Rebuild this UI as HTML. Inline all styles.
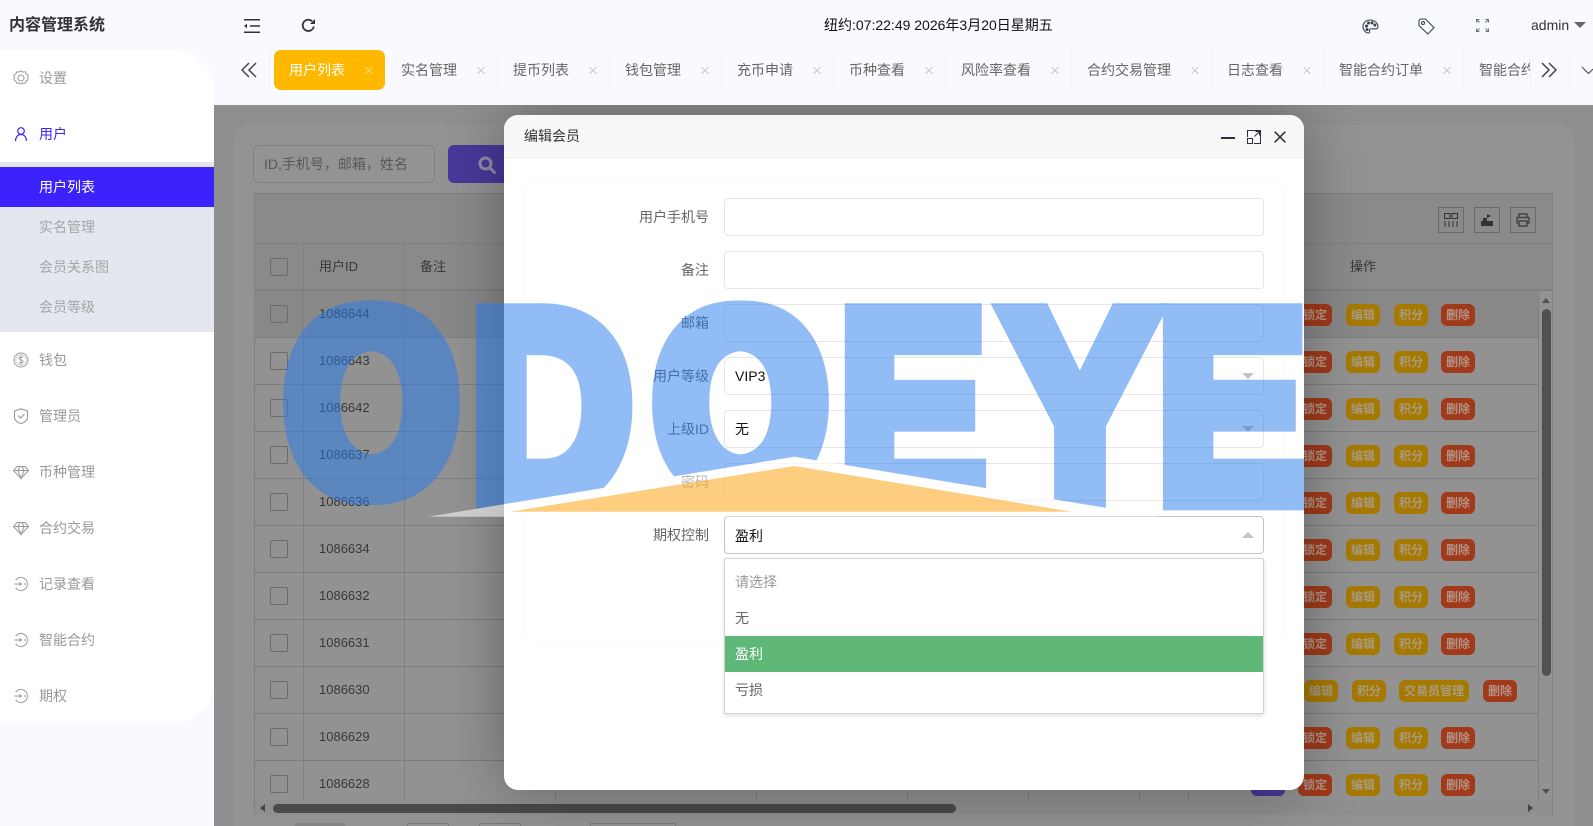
<!DOCTYPE html>
<html lang="zh"><head><meta charset="utf-8"><title>内容管理系统</title>
<style>
html,body{margin:0;padding:0;width:1593px;height:826px;overflow:hidden;background:#f8faff;font-family:"Liberation Sans","Noto Sans CJK SC",sans-serif;font-size:14px}
.a{position:absolute}
.t{position:absolute;line-height:20px;white-space:nowrap}
#content{position:absolute;left:214px;top:105px;width:1379px;height:721px;background:#8e8f91;overflow:hidden}
#wrap{position:absolute;left:0;top:0;width:1593px;height:826px;overflow:hidden}
.ck{position:absolute;left:270px;width:16px;height:16px;border:1px solid #6c6c6c;border-radius:2px}
.hl{position:absolute;left:254px;width:1284px;height:1px;background:#7e7e7e}
.vl{position:absolute;top:243px;height:557px;width:1px;background:#808080}
.id{position:absolute;left:319px;line-height:20px;color:#383838;font-size:13px}
.b{position:absolute;height:22px;line-height:22px;border-radius:6px;font-size:12px;font-weight:700;text-align:center;color:#a89b80;width:34px}
.r{background:#a03a1a;color:#b39385}.y{background:#a67900}
.tt{position:absolute;top:60px;line-height:20px;color:#666;white-space:nowrap}
.tx{position:absolute;top:61px;line-height:20px;color:#cfcfcf;font-size:17px;width:14px;text-align:center}
.sp{position:absolute;top:50px;height:40px;width:1px;background:#f0f2f7}
.m{position:absolute;left:39px;line-height:20px;color:#999;white-space:nowrap}
.sub{color:#a6a6a6}
.ic{position:absolute;left:13px;width:16px;height:16px;fill:none;stroke:#999;stroke-width:1}
.lb{position:absolute;right:884px;line-height:20px;color:#666;white-space:nowrap}
.in{position:absolute;left:724px;width:538px;height:36px;border:1px solid #e6e6e6;border-radius:4px;background:transparent}
.val{position:absolute;left:735px;line-height:20px;color:#111}
.ar{position:absolute;left:1242px;width:0;height:0;border-left:6px solid transparent;border-right:6px solid transparent}
.op{position:absolute;left:0;width:538px;height:36px;line-height:36px;color:#666;text-indent:10px}
.tb{position:absolute;top:207px;width:24px;height:24px;border:1px solid #6a6a6a}
</style></head>
<body>
<div id="wrap">
<div id="content"></div>
<div class="a" style="left:234px;top:125px;width:1340px;height:701px;background:#939394;border-radius:16px 16px 0 0"></div>
<div class="a" style="left:254px;top:193px;width:1299px;height:622px;background:#929292;border:1px solid #808080;box-sizing:border-box"></div>
<div class="a" style="left:254px;top:193px;width:1299px;height:97px;background:#8a8a8a;border:1px solid #808080;box-sizing:border-box"></div>
<div class="a" style="left:254px;top:290px;width:1284px;height:47px;background:#888"></div>
<div class="a" style="left:253px;top:145px;width:180px;height:36px;border:1px solid #808080;border-radius:6px"></div>
<div class="t" style="left:264px;top:154px;color:#585858">ID,手机号，邮箱，姓名</div>
<div class="a" style="left:448px;top:145px;width:70px;height:38px;background:#49389a;border-radius:6px"></div>
<svg class="a" style="left:478px;top:156px" width="18" height="18" viewBox="0 0 18 18" fill="none" stroke="#8f8da8" stroke-width="3"><circle cx="7.5" cy="7.5" r="5.5"/><path d="M12 12l4.5 4.5" stroke-linecap="round"/></svg>

<div class="hl" style="top:243px;width:1299px"></div><div class="hl" style="top:290px;width:1299px"></div><div class="hl" style="top:337px"></div><div class="hl" style="top:384px"></div><div class="hl" style="top:431px"></div><div class="hl" style="top:478px"></div><div class="hl" style="top:525px"></div><div class="hl" style="top:572px"></div><div class="hl" style="top:619px"></div><div class="hl" style="top:666px"></div><div class="hl" style="top:713px"></div><div class="hl" style="top:760px"></div>
<div class="vl" style="left:303px"></div><div class="vl" style="left:404px"></div><div class="vl" style="left:555px"></div><div class="vl" style="left:756px"></div><div class="vl" style="left:907px"></div><div class="vl" style="left:1028px"></div><div class="vl" style="left:1139px"></div><div class="vl" style="left:1188px"></div>

<div class="tb" style="left:1438px"></div><div class="tb" style="left:1474px"></div><div class="tb" style="left:1510px"></div>
<svg class="a" style="left:1444px;top:213px" width="14" height="14" viewBox="0 0 14 14" fill="none" stroke="#333"><path d="M.5.5h5.5v5H.5zM8 .5h5.5v5H8zM1 8v6M5 8v6M9 8v6M13 8v6"/></svg>
<svg class="a" style="left:1480px;top:213px" width="14" height="14" viewBox="0 0 14 14" fill="#333"><path d="M1 8h12v5H1zM3 5h4v3H3zM7 1l4 2-4 2z"/></svg>
<svg class="a" style="left:1516px;top:213px" width="14" height="14" viewBox="0 0 14 14" fill="none" stroke="#444" stroke-width="1.4"><path d="M3 4V1h8v3M3 10H1V4.500h12V10h-2M3 8h8v5H3z"/></svg>

<div class="ck" style="top:258px"></div>
<div class="t" style="left:319px;top:257px;color:#383838;font-size:13px">用户ID</div>
<div class="t" style="left:420px;top:257px;color:#383838;font-size:13px">备注</div>
<div class="t" style="left:1350px;top:257px;color:#383838;font-size:13px">操作</div>

<div class="ck" style="top:305px"></div><div class="id" style="top:304px">1086644</div>
<div class="ck" style="top:352px"></div><div class="id" style="top:351px">1086643</div>
<div class="ck" style="top:399px"></div><div class="id" style="top:398px">1086642</div>
<div class="ck" style="top:446px"></div><div class="id" style="top:445px">1086637</div>
<div class="ck" style="top:493px"></div><div class="id" style="top:492px">1086636</div>
<div class="ck" style="top:540px"></div><div class="id" style="top:539px">1086634</div>
<div class="ck" style="top:587px"></div><div class="id" style="top:586px">1086632</div>
<div class="ck" style="top:634px"></div><div class="id" style="top:633px">1086631</div>
<div class="ck" style="top:681px"></div><div class="id" style="top:680px">1086630</div>
<div class="ck" style="top:728px"></div><div class="id" style="top:727px">1086629</div>
<div class="ck" style="top:775px"></div><div class="id" style="top:774px">1086628</div>

<div class="b r" style="left:1298px;top:304px">锁定</div><div class="b y" style="left:1346px;top:304px">编辑</div><div class="b y" style="left:1394px;top:304px">积分</div><div class="b r" style="left:1441px;top:304px">删除</div>
<div class="b r" style="left:1298px;top:351px">锁定</div><div class="b y" style="left:1346px;top:351px">编辑</div><div class="b y" style="left:1394px;top:351px">积分</div><div class="b r" style="left:1441px;top:351px">删除</div>
<div class="b r" style="left:1298px;top:398px">锁定</div><div class="b y" style="left:1346px;top:398px">编辑</div><div class="b y" style="left:1394px;top:398px">积分</div><div class="b r" style="left:1441px;top:398px">删除</div>
<div class="b r" style="left:1298px;top:445px">锁定</div><div class="b y" style="left:1346px;top:445px">编辑</div><div class="b y" style="left:1394px;top:445px">积分</div><div class="b r" style="left:1441px;top:445px">删除</div>
<div class="b r" style="left:1298px;top:492px">锁定</div><div class="b y" style="left:1346px;top:492px">编辑</div><div class="b y" style="left:1394px;top:492px">积分</div><div class="b r" style="left:1441px;top:492px">删除</div>
<div class="b r" style="left:1298px;top:539px">锁定</div><div class="b y" style="left:1346px;top:539px">编辑</div><div class="b y" style="left:1394px;top:539px">积分</div><div class="b r" style="left:1441px;top:539px">删除</div>
<div class="b r" style="left:1298px;top:586px">锁定</div><div class="b y" style="left:1346px;top:586px">编辑</div><div class="b y" style="left:1394px;top:586px">积分</div><div class="b r" style="left:1441px;top:586px">删除</div>
<div class="b r" style="left:1298px;top:633px">锁定</div><div class="b y" style="left:1346px;top:633px">编辑</div><div class="b y" style="left:1394px;top:633px">积分</div><div class="b r" style="left:1441px;top:633px">删除</div>
<div class="b y" style="left:1304px;top:680px">编辑</div><div class="b y" style="left:1352px;top:680px">积分</div><div class="b y" style="left:1399px;top:680px;width:70px">交易员管理</div><div class="b r" style="left:1483px;top:680px">删除</div>
<div class="b r" style="left:1298px;top:727px">锁定</div><div class="b y" style="left:1346px;top:727px">编辑</div><div class="b y" style="left:1394px;top:727px">积分</div><div class="b r" style="left:1441px;top:727px">删除</div>
<div class="b" style="left:1251px;top:774px;background:#49389a"></div><div class="b r" style="left:1298px;top:774px">锁定</div><div class="b y" style="left:1346px;top:774px">编辑</div><div class="b y" style="left:1394px;top:774px">积分</div><div class="b r" style="left:1441px;top:774px">删除</div>

<div class="a" style="left:1538px;top:290px;width:1px;height:510px;background:#808080"></div>
<div class="a" style="left:1542px;top:309px;width:9px;height:367px;background:#505050;border-radius:5px"></div>
<div class="a" style="left:1542px;top:298px;border:4.500px solid transparent;border-top:0;border-bottom:5px solid #505050"></div>
<div class="a" style="left:1542px;top:789px;border:4.500px solid transparent;border-bottom:0;border-top:5px solid #505050"></div>
<div class="a" style="left:255px;top:800px;width:1297px;height:15px;background:#8f8f8f"></div>
<div class="a" style="left:273px;top:804px;width:683px;height:9px;background:#4a4a4a;border-radius:5px"></div>
<div class="a" style="left:260px;top:804px;border:4.500px solid transparent;border-left:0;border-right:5px solid #444"></div>
<div class="a" style="left:1528px;top:804px;border:4.500px solid transparent;border-right:0;border-left:5px solid #444"></div>
<div class="a" style="left:295px;top:823px;width:50px;height:3px;background:#848484;border-radius:3px 3px 0 0"></div>
<div class="a" style="left:407px;top:823px;width:40px;height:3px;border:1px solid #7a7a7a"></div>
<div class="a" style="left:479px;top:823px;width:40px;height:3px;border:1px solid #7a7a7a"></div>
<div class="a" style="left:590px;top:823px;width:84px;height:3px;border:1px solid #7a7a7a"></div>

<!-- modal -->
<div class="a" style="left:504px;top:115px;width:800px;height:675px;background:#fff;border-radius:14px;box-shadow:0 0 60px rgba(0,0,0,.33)"></div>
<div class="a" style="left:504px;top:115px;width:800px;height:42px;background:#f8f8f8;border-bottom:1px solid #eee;border-radius:14px 14px 0 0"></div>
<div class="t" style="left:524px;top:126px;color:#333">编辑会员</div>
<div class="a" style="left:1221px;top:137px;width:14px;height:2px;background:#2f2f3f"></div>
<svg class="a" style="left:1247px;top:130px" width="14" height="14" viewBox="0 0 14 14" fill="none" stroke="#2f2f3f"><path d="M.5 7V.5h13v13H7M.5 8.500h5v5h-5zM7.500 6.500l5-5M8.500 1.500h4v4"/></svg>
<svg class="a" style="left:1274px;top:131px" width="12" height="12" viewBox="0 0 12 12" fill="none" stroke="#2f2f3f" stroke-width="1.500"><path d="M.7.7l10.600 10.600M11.300.7L.7 11.300"/></svg>
<div class="a" style="left:523px;top:180px;width:760px;height:461px;border:1px solid #f9fafb;border-radius:14px"></div>

<div class="lb" style="top:207px">用户手机号</div><div class="in" style="top:198px"></div>
<div class="lb" style="top:260px">备注</div><div class="in" style="top:251px"></div>
<div class="lb" style="top:313px">邮箱</div><div class="in" style="top:304px"></div>
<div class="lb" style="top:366px">用户等级</div><div class="in" style="top:357px"></div><div class="val" style="top:366px">VIP3</div><div class="ar" style="top:373px;border-top:6px solid #c2c2c2"></div>
<div class="lb" style="top:419px">上级ID</div><div class="in" style="top:410px"></div><div class="val" style="top:419px">无</div><div class="ar" style="top:426px;border-top:6px solid #c2c2c2"></div>
<div class="lb" style="top:472px">密码</div><div class="in" style="top:463px"></div>
<div class="lb" style="top:525px">期权控制</div><div class="in" style="top:516px;border-color:#c4c4c4"></div><div class="val" style="top:526px">盈利</div><div class="ar" style="top:532px;border-bottom:6px solid #c2c2c2"></div>

<div class="a" style="left:724px;top:558px;width:538px;height:154px;background:#fff;border:1px solid #d2d2d2;border-radius:2px;box-shadow:0 2px 4px rgba(0,0,0,.12)">
<div class="op" style="top:5px;color:#999">请选择</div>
<div class="op" style="top:41px">无</div>
<div class="op" style="top:77px;background:#5fb878;color:#fff">盈利</div>
<div class="op" style="top:113px">亏损</div>
</div>

<!-- header + sidebar -->
<div class="a" style="left:0;top:0;width:1593px;height:105px;background:#f8faff"></div>
<div class="a" style="left:0;top:105px;width:214px;height:721px;background:#f8faff"></div>
<div class="a" style="left:0;top:50px;width:214px;height:673px;background:#fff;border-radius:0 40px 40px 0"></div>
<div class="t" style="left:9px;top:16px;font-size:16px;font-weight:700;color:#333">内容管理系统</div>
<svg class="a" style="left:244px;top:19px" width="16" height="14" viewBox="0 0 16 14" fill="#333"><path d="M0 0h16v1.500H0zM0 12.500h16V14H0zM6 6.200h10v1.500H6zM0 7l3-2.200v4.400z"/></svg>
<svg class="a" style="left:301px;top:18px" width="15" height="15" viewBox="0 0 15 15" fill="none" stroke="#333" stroke-width="1.800"><path d="M12.800 8.500A5.600 5.600 0 1 1 11.200 3.300"/><path d="M14 1v5H9z" fill="#333" stroke="none"/></svg>
<div class="t" style="left:824px;top:15px;color:#111">纽约:07:22:49 2026年3月20日星期五</div>
<svg class="a" style="left:1362px;top:19px" width="17" height="15" viewBox="0 0 17 15" fill="none" stroke="#3c4250" stroke-width="1.100"><path d="M8 1C4 1 1 4 1 7.500 1 11 3.500 14 6.500 14c1.500 0 1.500-1 1-2-.5-1.200.5-2.300 2-2.200 2 .1 6.500.6 6.500-1.800C16 4 12.500 1 8 1z"/><circle cx="4.500" cy="7" r="1" fill="#3c4250"/><circle cx="6.500" cy="4" r="1" fill="#3c4250"/><circle cx="10" cy="3.800" r="1" fill="#3c4250"/><circle cx="12.800" cy="6" r="1" fill="#3c4250"/><circle cx="5" cy="10.500" r="1" fill="#3c4250"/></svg>
<svg class="a" style="left:1418px;top:18px" width="17" height="17" viewBox="0 0 17 17" fill="none" stroke="#3c4250" stroke-width="1.100"><path d="M1 2.500L2.500 1H7.500L16 9.800 9.800 16 1 7.500z"/><circle cx="5" cy="5" r="1.500"/></svg>
<svg class="a" style="left:1476px;top:19px" width="13" height="13" viewBox="0 0 13 13" fill="none" stroke="#6a7080" stroke-width="1.100"><path d="M.5 3.500v-3h3M.5.500l3 3M9.500.500h3v3M12.500.500l-3 3M.5 9.500v3h3M.5 12.500l3-3M12.500 9.500v3h-3M12.500 12.500l-3-3"/></svg>
<div class="t" style="left:1531px;top:15px;color:#333">admin</div>
<div class="a" style="left:1574px;top:22px;border:6px solid transparent;border-bottom:0;border-top:6px solid #666"></div>

<svg class="a" style="left:241px;top:62px" width="16" height="16" viewBox="0 0 16 16" fill="none" stroke="#444" stroke-width="1.500"><path d="M8 1L1 8l7 7M15 1L8 8l7 7"/></svg>
<div class="sp" style="left:269px"></div>
<div class="a" style="left:274px;top:50px;width:111px;height:40px;background:#ffb800;border-radius:7px"></div>
<div class="tt" style="left:289px;color:#fff">用户列表</div><div class="tx" style="left:362px;color:#ffd76a">×</div>
<div class="tt" style="left:401px">实名管理</div><div class="tx" style="left:474px">×</div><div class="sp" style="left:497px"></div>
<div class="tt" style="left:513px">提币列表</div><div class="tx" style="left:586px">×</div><div class="sp" style="left:609px"></div>
<div class="tt" style="left:625px">钱包管理</div><div class="tx" style="left:698px">×</div><div class="sp" style="left:721px"></div>
<div class="tt" style="left:737px">充币申请</div><div class="tx" style="left:810px">×</div><div class="sp" style="left:833px"></div>
<div class="tt" style="left:849px">币种查看</div><div class="tx" style="left:922px">×</div><div class="sp" style="left:945px"></div>
<div class="tt" style="left:961px">风险率查看</div><div class="tx" style="left:1048px">×</div><div class="sp" style="left:1071px"></div>
<div class="tt" style="left:1087px">合约交易管理</div><div class="tx" style="left:1188px">×</div><div class="sp" style="left:1211px"></div>
<div class="tt" style="left:1227px">日志查看</div><div class="tx" style="left:1300px">×</div><div class="sp" style="left:1323px"></div>
<div class="tt" style="left:1339px">智能合约订单</div><div class="tx" style="left:1440px">×</div><div class="sp" style="left:1463px"></div>
<div class="a" style="left:1464px;top:50px;width:66px;height:40px;overflow:hidden"><div class="tt" style="left:15px;top:10px">智能合约订单</div></div>
<div class="sp" style="left:1530px"></div>
<svg class="a" style="left:1541px;top:62px" width="16" height="16" viewBox="0 0 16 16" fill="none" stroke="#444" stroke-width="1.500"><path d="M1 1l7 7-7 7M8 1l7 7-7 7"/></svg>
<div class="sp" style="left:1569px"></div>
<svg class="a" style="left:1581px;top:66px" width="12" height="8" viewBox="0 0 12 8" fill="none" stroke="#555" stroke-width="1.200"><path d="M1 1l6.500 6.500L12 3"/></svg>

<!-- menu -->
<svg class="ic" style="top:70px" viewBox="0 0 16 16"><path d="M8 .8l2 1.300 2.300-.3.900 2.100 2 1.300-.6 2.300.6 2.300-2 1.300-.9 2.100-2.300-.3-2 1.300-2-1.300-2.300.3-.9-2.100-2-1.300.6-2.300-.6-2.300 2-1.300.9-2.100 2.300.3z"/><circle cx="8" cy="8" r="3"/></svg>
<div class="m" style="top:68px">设置</div>
<svg class="ic" style="top:126px;stroke:#3d23fb;stroke-width:1.200" viewBox="0 0 16 16"><circle cx="8" cy="5" r="3.300"/><path d="M2.500 15c0-3.500 2-6.500 5.500-6.500s5.500 3 5.500 6.500"/></svg>
<div class="m" style="top:124px;color:#3d23fb">用户</div>
<div class="a" style="left:0;top:162px;width:214px;height:170px;background:#e4e7ef"></div>
<div class="a" style="left:0;top:167px;width:214px;height:40px;background:#3d23fb"></div>
<div class="m" style="top:177px;color:#fff">用户列表</div>
<div class="m sub" style="top:217px">实名管理</div>
<div class="m sub" style="top:257px">会员关系图</div>
<div class="m sub" style="top:297px">会员等级</div>
<svg class="ic" style="top:352px" viewBox="0 0 16 16"><circle cx="8" cy="8" r="7"/><circle cx="8" cy="8" r="5.200" stroke-width=".5"/><path d="M10 5.500C9 4.700 6.200 4.700 6 6.300 5.900 8 10 7.800 10 9.600c0 1.600-3 1.700-4.200.7M8 3.500v9" stroke-width=".9"/></svg>
<div class="m" style="top:350px">钱包</div>
<svg class="ic" style="top:408px;stroke-width:1.100" viewBox="0 0 16 16"><path d="M8 .8L14.500 3v6.500C14.500 12.500 10.500 15 8 15.500 5.500 15 1.500 12.500 1.500 9.500V3z"/><path d="M5 7.500l2.500 2.500 4-4"/></svg>
<div class="m" style="top:406px">管理员</div>
<svg class="ic" style="top:464px" viewBox="0 0 16 16"><path d="M4 2.500h8L15.500 6.500 8 14.500.5 6.500zM.5 6.500h15M5 6.500l3 8 3-8M5 6.500L7 2.500h2l2 4"/></svg>
<div class="m" style="top:462px">币种管理</div>
<svg class="ic" style="top:520px" viewBox="0 0 16 16"><path d="M4 2.500h8L15.500 6.500 8 14.500.5 6.500zM.5 6.500h15M5 6.500l3 8 3-8M5 6.500L7 2.500h2l2 4"/></svg>
<div class="m" style="top:518px">合约交易</div>
<svg class="ic" style="top:576px" viewBox="0 0 16 16"><path d="M2.800 4a6.500 6.500 0 1 1 0 8M1.500 8h7M6.500 6.500L8.500 8l-2 1.500M11 8h2"/></svg>
<div class="m" style="top:574px">记录查看</div>
<svg class="ic" style="top:632px" viewBox="0 0 16 16"><path d="M2.800 4a6.500 6.500 0 1 1 0 8M1.500 8h7M6.500 6.500L8.500 8l-2 1.500M11 8h2"/></svg>
<div class="m" style="top:630px">智能合约</div>
<svg class="ic" style="top:688px" viewBox="0 0 16 16"><path d="M2.800 4a6.500 6.500 0 1 1 0 8M1.500 8h7M6.500 6.500L8.500 8l-2 1.500M11 8h2"/></svg>
<div class="m" style="top:686px">期权</div>

<!-- watermark -->
<svg class="a" style="left:0;top:0;pointer-events:none" width="1593" height="826" viewBox="0 0 1593 826">
<defs><clipPath id="c"><path d="M270 290H1304V530L1160 516.700 794.400 456.700 428 516.700 270 530z"/></clipPath></defs>
<g opacity=".5" clip-path="url(#c)" font-family="Liberation Sans" font-weight="700" font-size="259" fill="#277beb" stroke="#277beb" stroke-width="21">
<text transform="translate(283 492) scale(.84 1)">O</text>
<text transform="translate(287 492) scale(.84 1)">O</text>
<text transform="translate(291 492) scale(.84 1)">O</text>
<text transform="translate(470 499.500) scale(.87 1.040)">D</text>
<text transform="translate(652 492) scale(.84 1)">O</text>
<text transform="translate(656 492) scale(.84 1)">O</text>
<text transform="translate(660 492) scale(.84 1)">O</text>
<text transform="translate(839 499.500) scale(.85 1.040)">E</text>
<text transform="translate(1003 499.500) scale(.89 1.040)">Y</text>
<text transform="translate(1157 499.500) scale(.866 1.040)">E</text>
</g>
<path d="M428 516.700L794.400 456.700 1160 516.700z" fill="#fff" opacity=".55"/>
<path d="M510 511.700L794.400 466 1072 511.700z" fill="#fb9e00" opacity=".5"/>
</svg>
</div>
</body></html>
